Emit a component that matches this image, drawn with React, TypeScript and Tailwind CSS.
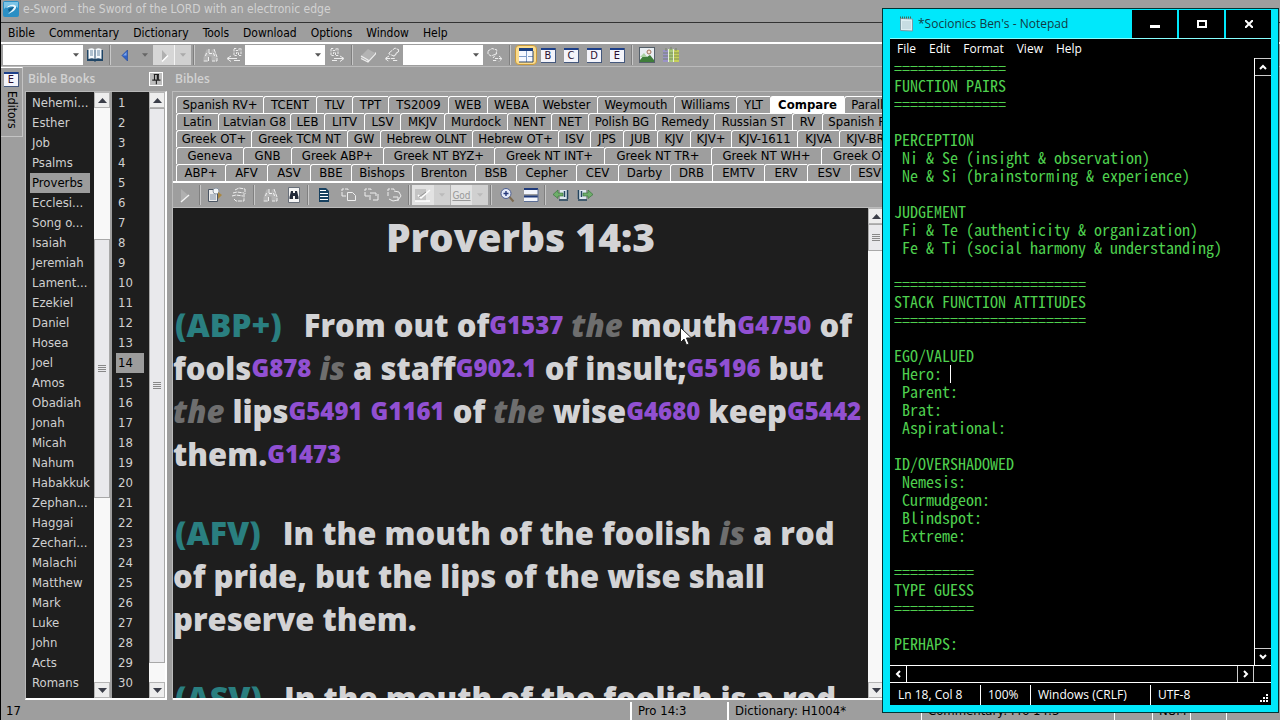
// src/App.tsx
import { useState } from "react";
import type { ReactNode } from "react";
import clsx from "clsx";

interface Tab {
  label: string;
  width: string;
}

const MENUS = ["Bible", "Commentary", "Dictionary", "Tools", "Download", "Options", "Window", "Help"];

const BOOKS = [
  "Nehemi...", "Esther", "Job", "Psalms", "Proverbs", "Ecclesi...", "Song o...", "Isaiah", "Jeremiah", "Lament...",
  "Ezekiel", "Daniel", "Hosea", "Joel", "Amos", "Obadiah", "Jonah", "Micah", "Nahum", "Habakkuk",
  "Zephan...", "Haggai", "Zechari...", "Malachi", "Matthew", "Mark", "Luke", "John", "Acts", "Romans",
];

const TAB_ROWS: Tab[][] = [
  [
    { label: "Spanish RV+", width: "w-[87px]" },
    { label: "TCENT", width: "w-[53px]" },
    { label: "TLV", width: "w-[36px]" },
    { label: "TPT", width: "w-[36px]" },
    { label: "TS2009", width: "w-[60px]" },
    { label: "WEB", width: "w-[39px]" },
    { label: "WEBA", width: "w-[48px]" },
    { label: "Webster", width: "w-[62px]" },
    { label: "Weymouth", width: "w-[77px]" },
    { label: "Williams", width: "w-[62px]" },
    { label: "YLT", width: "w-[34px]" },
    { label: "Compare", width: "w-[74px]" },
    { label: "Parallel", width: "w-[56px]" },
  ],
  [
    { label: "Latin", width: "w-[42px]" },
    { label: "Latvian G8", width: "w-[72px]" },
    { label: "LEB", width: "w-[34px]" },
    { label: "LITV", width: "w-[40px]" },
    { label: "LSV", width: "w-[36px]" },
    { label: "MKJV", width: "w-[44px]" },
    { label: "Murdock", width: "w-[63px]" },
    { label: "NENT", width: "w-[44px]" },
    { label: "NET", width: "w-[37px]" },
    { label: "Polish BG", width: "w-[67px]" },
    { label: "Remedy", width: "w-[59px]" },
    { label: "Russian ST", width: "w-[78px]" },
    { label: "RV", width: "w-[30px]" },
    { label: "Spanish RV", width: "w-[77px]" },
  ],
  [
    { label: "Greek OT+", width: "w-[75px]" },
    { label: "Greek TCM NT", width: "w-[96px]" },
    { label: "GW", width: "w-[33px]" },
    { label: "Hebrew OLNT", width: "w-[92px]" },
    { label: "Hebrew OT+", width: "w-[86px]" },
    { label: "ISV", width: "w-[32px]" },
    { label: "JPS", width: "w-[33px]" },
    { label: "JUB", width: "w-[34px]" },
    { label: "KJV", width: "w-[33px]" },
    { label: "KJV+", width: "w-[41px]" },
    { label: "KJV-1611", width: "w-[66px]" },
    { label: "KJVA", width: "w-[42px]" },
    { label: "KJV-BRG", width: "w-[61px]" },
  ],
  [
    { label: "Geneva", width: "w-[67px]" },
    { label: "GNB", width: "w-[48px]" },
    { label: "Greek ABP+", width: "w-[92px]" },
    { label: "Greek NT BYZ+", width: "w-[111px]" },
    { label: "Greek NT INT+", width: "w-[110px]" },
    { label: "Greek NT TR+", width: "w-[107px]" },
    { label: "Greek NT WH+", width: "w-[110px]" },
    { label: "Greek OT", width: "w-[78px]" },
  ],
  [
    { label: "ABP+", width: "w-[49px]" },
    { label: "AFV", width: "w-[42px]" },
    { label: "ASV", width: "w-[43px]" },
    { label: "BBE", width: "w-[41px]" },
    { label: "Bishops", width: "w-[61px]" },
    { label: "Brenton", width: "w-[63px]" },
    { label: "BSB", width: "w-[41px]" },
    { label: "Cepher", width: "w-[60px]" },
    { label: "CEV", width: "w-[42px]" },
    { label: "Darby", width: "w-[52px]" },
    { label: "DRB", width: "w-[42px]" },
    { label: "EMTV", width: "w-[52px]" },
    { label: "ERV", width: "w-[43px]" },
    { label: "ESV", width: "w-[43px]" },
    { label: "ESV+", width: "w-[48px]" },
  ],
];

const NOTES = `==============
FUNCTION PAIRS
==============

PERCEPTION
 Ni & Se (insight & observation)
 Ne & Si (brainstorming & experience)

JUDGEMENT
 Fi & Te (authenticity & organization)
 Fe & Ti (social harmony & understanding)

========================
STACK FUNCTION ATTITUDES
========================

EGO/VALUED
 Hero: 
 Parent:
 Brat:
 Aspirational:

ID/OVERSHADOWED
 Nemesis:
 Curmudgeon:
 Blindspot:
 Extreme:

==========
TYPE GUESS
==========

PERHAPS:`;

/* ---------- icons ---------- */

function Svg({ children, size = 16 }: { children: ReactNode; size?: number }) {
  return (
    <svg width={size} height={size} viewBox="0 0 16 16" fill="none" aria-hidden="true">
      {children}
    </svg>
  );
}

const LogoIcon = () => (
  <Svg>
    <rect width="16" height="16" rx="2" fill="#2b8fc4" />
    <path d="M1 1h14v6C11 3 6 3 1 8z" fill="#7cc4e6" />
    <path d="M3 7c3-4 8-4 10-2 1 3-3 6-8 8 3-3 5-5 6-7-3-1-5 0-8 1z" fill="#e8f6fc" />
    <path d="M5 8c2-1 4-2 6-2-1 2-3 4-5 5z" fill="#14618f" />
  </Svg>
);

const BookIcon = () => (
  <Svg>
    <path d="M0 3h16v11H9l-1 1-1-1H0z" fill="#1f4566" />
    <path d="M1.500 2C4 1 6 1 7.500 2.500v9.500C6 11 4 11 1.500 12zM14.500 2C12 1 10 1 8.500 2.500v9.500c1.500-1 3.500-1 6 0z" fill="#f4f8fb" />
    <path d="M3 4h3M3 6h3M3 8h3M10 4h3M10 6h3M10 8h3" stroke="#6b8ba6" />
  </Svg>
);

const BackIcon = () => (
  <Svg>
    <path d="M10.500 3v11L5 8.500z" fill="#2f63c8" stroke="#1c459c" strokeWidth=".6" />
    <path d="M9.500 5v3.500H6z" fill="#7ea6ea" />
  </Svg>
);

const ForwardIcon = () => (
  <Svg>
    <path d="M6 3l5 5.500L6 14z" fill="#b0b0b0" />
    <path d="M6 14.500l6-6" stroke="#fff" strokeWidth="1.500" />
  </Svg>
);

const PlayIcon = () => (
  <Svg>
    <path d="M4 2v12l7-6z" fill="#b0b0b0" />
    <path d="M4 15l8-7" stroke="#f2f2f2" strokeWidth="1.500" />
  </Svg>
);

const FindIcon = () => (
  <Svg>
    <path d="M4.500 2.500h2v3h3v-3h2l3 8v3h-5v-4h-3v4h-5v-3z" fill="#b2b2b2" />
    <path d="M7 2v4M12 2l3 8v4h-5M6.500 10v4H1M7 6.500h3M3.500 9l1-3M12.500 9l-1-3" stroke="#f2f2f2" strokeDasharray="4 .8" />
  </Svg>
);

const FindPrevIcon = ({ flip = false }: { flip?: boolean }) => (
  <Svg>
    <path d={flip ? "M2 1.500h2v2h3v-2h2v7H6.500v-3h-2v3H2z" : "M8 1.500h2v2h3v-2h2v7h-2.500v-3h-2v3H8z"} stroke="#eee" strokeDasharray="2.500 1" />
    <path d={flip ? "M5 11.500h9M11 9l4 2.500-4 3M3 13.500h5" : "M2 11.500h9M5 9l-4 2.500 4 3M8 13.500h6"} stroke="#eee" />
  </Svg>
);

const EraserIcon = () => (
  <Svg>
    <path d="M1 9l7-7 7 4-7 8-7-3z" fill="#b3b3b3" />
    <path d="M1 11.500L8 15l7.500-8V5.500M8 12.500v2M1 9l7 4" stroke="#eee" strokeWidth="1.200" />
  </Svg>
);

const EraseArrowIcon = ({ flip = false }: { flip?: boolean }) => (
  <Svg>
    {flip ? (
      <path d="M1 4l4-2.500L10 3l-1 4-5 2-3-2zM6 11l4-5M8 11.500h7M12 9l3 2.500-3 3M6 13.500h4" stroke="#eee" strokeDasharray="3 .8" />
    ) : (
      <path d="M5 6l6-5 4 2-5 6-5-2zM2 11.500h9M5 9l-4 2.500 4 3M9 13.500h5M10 9.500L15 4" stroke="#eee" strokeDasharray="4 .8" />
    )}
  </Svg>
);

const LayoutIcon = () => (
  <Svg>
    <rect x="1" y="1" width="14" height="14" fill="#f5f8ff" />
    <path d="M1 1h14v3H1z" fill="#1c3f7f" />
    <path d="M8.500 4v11M1 9.500h7M10 9.500h5" stroke="#7d9cc9" />
    <path d="M15 4v11H1" stroke="#2d4468" />
  </Svg>
);

function LetterIcon({ letter }: { letter: string }) {
  return (
    <span className="flex h-[15px] w-[15px] flex-col border-r border-b border-[#44587d] bg-[#f4f4fa]">
      <span className="h-[3px] bg-[#1c3f8a]" />
      <span className="text-center text-[11px] leading-[12px] text-[#2c1030]">{letter}</span>
    </span>
  );
}

const PictureIcon = () => (
  <Svg>
    <rect x=".5" y=".5" width="15" height="15" fill="#e9eef2" stroke="#55606a" />
    <circle cx="10" cy="5" r="2" fill="#f6e2d4" stroke="#a0705a" />
    <path d="M1 13l4-5 3 2 3-2 4 5v2H1z" fill="#3f7d3a" />
    <path d="M1 10l4-4 3 4z" fill="#a9cfa0" />
  </Svg>
);

const ParallelIcon = () => (
  <Svg>
    <path d="M0 3h5v12H0z" fill="#9b93c8" />
    <path d="M5 2h5v13H5z" fill="#a8c878" />
    <path d="M10 3h6v12h-6z" fill="#c6cf58" />
    <path d="M0 6h16M0 9h16M0 12h16M3 1v3M8 0v3M13 1v3" stroke="#6c7e58" strokeWidth=".8" />
    <path d="M5.500 2v13M10.500 2v13" stroke="#e8efda" />
  </Svg>
);

const NoteIcon = () => (
  <Svg>
    <path d="M1.500 2.500h9v12h-9z" fill="#ececec" stroke="#4b5664" />
    <path d="M3 8h6M3 10h6M3 12h6" stroke="#7f8ea3" />
    <circle cx="9" cy="4" r="3" fill="#f3f6f8" stroke="#8d97a3" />
    <path d="M11 5l4 3-4 4z" fill="#a98743" />
  </Svg>
);

const StackIcon = () => (
  <Svg>
    <path d="M4 3l4-2 6 1v5M2 6l4-1 7 1M1 9l4-1 7 1M3 12l2 2h8V7" stroke="#eee" strokeDasharray="4 .8" />
  </Svg>
);

const SearchPageIcon = () => (
  <Svg>
    <path d="M2.500.5h11v15h-11z" fill="#f4f4f4" stroke="#69707a" />
    <path d="M5 4h2v2h2V4h2l1.500 6v2h-3.500V9H7v3H3.500v-2z" fill="#222a3a" />
  </Svg>
);

const LinesIcon = () => (
  <Svg>
    <path d="M3 1h7l3 3v11H3z" fill="#17405f" />
    <path d="M4 3.500h6M4 6.500h8M4 9.500h8M4 12.500h8" stroke="#fff" />
  </Svg>
);

const CopyIcon = ({ variant }: { variant: number }) => (
  <Svg>
    <path d="M1 9V2h6v2" stroke="#eee" strokeDasharray="4 1" />
    {variant === 0 && <path d="M6.500 5.500h5l3 3v5h-8zM1 9h4" stroke="#eee" />}
    {variant === 1 && <path d="M6 6h6v3M1 9h4M9 13h5V7M6 8v5" stroke="#eee" />}
    {variant === 2 && <path d="M2 12l4 2 5-1 3-4-2-4-5-1M6 10h5v4" stroke="#eee" />}
  </Svg>
);

const PenIcon = () => (
  <Svg>
    <path d="M0 2h11v12H0z" fill="#c4c4c4" />
    <path d="M0 14h15M3 8l3 3 9-8" stroke="#fff" strokeWidth="1.500" />
    <path d="M4 10l7-5" stroke="#999" />
  </Svg>
);

const ZoomIcon = () => (
  <Svg>
    <circle cx="7" cy="6.500" r="5" fill="#e3eaf8" stroke="#4e5f92" />
    <path d="M7 4v5M4.500 6.500h5" stroke="#26397c" strokeWidth="1.400" />
    <path d="M10.500 10l4 4.500" stroke="#7c6a50" strokeWidth="2" />
  </Svg>
);

const SplitIcon = () => (
  <Svg>
    <path d="M1 1h14v6H1zM1 9h14v6H1z" fill="#f2f5fc" />
    <path d="M1 2h14M1 9.500h14" stroke="#1f3a7a" strokeWidth="2" />
    <path d="M15 2v12.500H1" stroke="#5c6f97" />
  </Svg>
);

const SyncIcon = ({ right = false }: { right?: boolean }) => (
  <Svg>
    <path d={right ? "M1 3h8v9H1z" : "M7 3h8v9H7z"} fill="#dfe8ef" />
    <path d={right ? "M1 13h9M1.500 3v9M4.500 4v6" : "M6 13h9M14.500 3v9M11.500 4v6"} stroke="#23455f" strokeWidth="1.500" />
    <path d={right ? "M6 6h5V3l5 4.500-5 4V9H6z" : "M10 6H5V3L0 7.500l5 4V9h5z"} fill="#6fae6a" stroke="#2d6b33" strokeWidth=".6" />
  </Svg>
);

const PinIcon = () => (
  <Svg size={12}>
    <path d="M5 2h7M6 2v7M11 2v7M3 9.500h11M8.500 10v5" stroke="#222" strokeWidth="1.500" />
    <path d="M9 2h2v7H9z" fill="#222" />
  </Svg>
);

const NotepadIcon = () => (
  <Svg>
    <path d="M2.500 2.500l12 .5v12l-12-.5z" fill="#dceef2" stroke="#7a9aa5" />
    <path d="M4 6h9M4 8h9M4 10h9M4 12h9" stroke="#b2ccd3" />
    <path d="M2 1.500h12" stroke="#465" strokeWidth="2" strokeDasharray="1 1" />
  </Svg>
);

/* ---------- small pieces ---------- */

function Cell({ className, label, children }: { className: string; label: string; children: ReactNode }) {
  return (
    <button type="button" aria-label={label} className={clsx("flex h-5 shrink-0 items-center justify-center", className)}>
      {children}
    </button>
  );
}

function Separator() {
  return (
    <span className="flex w-1.5 shrink-0 justify-center">
      <span className="h-5 w-0.5 border-l border-[#808080] bg-[#c8c8c8]" />
    </span>
  );
}

function Triangle({ className }: { className?: string }) {
  return (
    <svg width="6" height="4" viewBox="0 0 7 4" className={clsx("fill-current", className)} aria-hidden="true">
      <path d="M0 0h7L3.500 4z" />
    </svg>
  );
}

function Combo({ label }: { label: string }) {
  return (
    <span className="relative flex h-5 w-20 shrink-0 items-center bg-white">
      <select aria-label={label} className="h-full w-full appearance-none bg-white">
        <option value="" />
      </select>
      <span className="pointer-events-none absolute right-1 text-[#555]">
        <Triangle />
      </span>
    </span>
  );
}

function ScrollButton({ up = false }: { up?: boolean }) {
  return (
    <button
      type="button"
      aria-label={up ? "Scroll up" : "Scroll down"}
      className="flex h-4 w-full shrink-0 items-center justify-center border border-[#b4b4b4] bg-[#ededed] text-[#3a3d48]"
    >
      <svg width="9" height="5" viewBox="0 0 9 5" className="fill-current" aria-hidden="true">
        <path d={up ? "M0 5h9L4.500 0z" : "M0 0h9L4.500 5z"} />
      </svg>
    </button>
  );
}

// before/thumb/after are flex-grow classes for the track
function ScrollBar({ before, thumb, after }: { before: string; thumb: string; after: string }) {
  return (
    <div className="flex w-4 shrink-0 flex-col bg-[#f8f8f8]">
      <ScrollButton up />
      <div className="flex min-h-0 flex-1 flex-col">
        <div className={before} />
        <div className={clsx("flex flex-col items-center justify-center gap-px border border-[#a8a8a8] bg-[#e9e9ec]", thumb)}>
          {[0, 1, 2, 3].map((n) => (
            <span key={n} className="h-px w-2 bg-[#888]" />
          ))}
        </div>
        <div className={after} />
      </div>
      <ScrollButton />
    </div>
  );
}

const Strong = ({ children }: { children: string }) => (
  <a href={`#${children}`} className="align-[3px] text-[24px] leading-none text-[#9150d2]">{children}</a>
);
const Added = ({ children }: { children: string }) => <i className="text-[#6e6e6e]">{children}</i>;
const Version = ({ children }: { children: string }) => (
  <span className="mr-3.5 ml-0.5 text-[32px] leading-none text-[#2a7f80]">({children})</span>
);

/* ---------- e-Sword window ---------- */

function MainToolbar() {
  return (
    <div className="flex h-[23px] shrink-0 items-center overflow-hidden border-b border-[#bbb] pl-0.5">
      <Combo label="Go to verse" />
      <Cell className="w-6" label="Look up"><BookIcon /></Cell>
      <Separator />
      <Cell className="w-6" label="Back"><BackIcon /></Cell>
      <Cell className="w-4" label="Back history"><Triangle className="text-[#666]" /></Cell>
      <Cell className="w-[21px] bg-[#d6d6d6]" label="Forward"><ForwardIcon /></Cell>
      <Cell className="w-[17px] border-l border-[#f4f4f4] bg-[#d0d0d0]" label="Forward history"><Triangle className="text-[#aaa]" /></Cell>
      <Separator />
      <Cell className="w-[26px]" label="Find"><FindIcon /></Cell>
      <Cell className="w-[22px]" label="Find previous"><FindPrevIcon /></Cell>
      <Combo label="Find text" />
      <Cell className="w-6" label="Find next"><FindPrevIcon flip /></Cell>
      <Separator />
      <Cell className="w-[26px]" label="Erase"><EraserIcon /></Cell>
      <Cell className="w-[22px]" label="Erase previous"><EraseArrowIcon /></Cell>
      <Combo label="Highlight" />
      <Cell className="w-6" label="Erase next"><EraseArrowIcon flip /></Cell>
      <Separator />
      <Cell className="ml-0.5 w-[22px] rounded-sm border border-[#c99a3c] bg-[#fbdc8d]" label="Layout"><LayoutIcon /></Cell>
      {["B", "C", "D", "E"].map((letter) => (
        <Cell key={letter} className="w-[23px]" label={`Show ${letter}`}><LetterIcon letter={letter} /></Cell>
      ))}
      <Separator />
      <Cell className="w-6" label="Graphics"><PictureIcon /></Cell>
      <Cell className="w-6" label="Harmony"><ParallelIcon /></Cell>
    </div>
  );
}

function BibleToolbar() {
  return (
    <div className="flex h-[25px] shrink-0 items-center overflow-hidden border-b border-[#bbb]">
      <Cell className="w-6" label="Play"><PlayIcon /></Cell>
      <Separator />
      <Cell className="w-6" label="Notes"><NoteIcon /></Cell>
      <Cell className="w-6" label="Highlights"><StackIcon /></Cell>
      <Separator />
      <Cell className="w-[26px]" label="Find in Bible"><FindIcon /></Cell>
      <Cell className="w-[22px]" label="Search"><SearchPageIcon /></Cell>
      <Separator />
      <Cell className="w-[26px]" label="Copy verses"><LinesIcon /></Cell>
      <Cell className="w-[23px]" label="Copy"><CopyIcon variant={0} /></Cell>
      <Cell className="w-[23px]" label="Copy chapter"><CopyIcon variant={1} /></Cell>
      <Cell className="w-[23px]" label="Copy book"><CopyIcon variant={2} /></Cell>
      <Separator />
      <Cell className="w-[22px] bg-[#e2e2e2]" label="Pen"><PenIcon /></Cell>
      <Cell className="w-4 bg-[#d0d0d0]" label="Pen colour"><Triangle className="text-[#bbb]" /></Cell>
      <Cell className="w-[22px] border-l border-[#b0b0b0] bg-[#e2e2e2] text-[10px] text-[#999] underline" label="Divine name">God</Cell>
      <Cell className="w-4 bg-[#d0d0d0]" label="Divine name options"><Triangle className="text-[#bbb]" /></Cell>
      <Separator />
      <Cell className="w-[26px]" label="Zoom"><ZoomIcon /></Cell>
      <Cell className="w-[22px]" label="Split"><SplitIcon /></Cell>
      <Separator />
      <Cell className="w-[26px]" label="Sync left"><SyncIcon /></Cell>
      <Cell className="w-[22px]" label="Sync right"><SyncIcon right /></Cell>
    </div>
  );
}

function BookPanel() {
  const [book, setBook] = useState("Proverbs");
  const [chapter, setChapter] = useState(14);

  return (
    <section className="flex w-[142px] shrink-0 flex-col">
      <div className="flex h-6 items-center justify-between pr-1 pl-[3px] font-['Open_Sans','Noto_Sans',sans-serif] text-[12px] font-semibold text-[#d2d2d2]">
        <h2>Bible Books</h2>
        <button type="button" aria-label="Pin" className="flex h-3.5 w-3.5 items-center justify-center border border-white bg-[#bdbdbd]">
          <PinIcon />
        </button>
      </div>
      <div className="flex min-h-0 flex-1 overflow-hidden border-t border-r-2 border-b-2 border-l border-white border-t-[#b8b8b8] border-l-[#b8b8b8] bg-[#1e1e1e] text-[13px] text-[#d0d0d0]">
        <ul className="min-w-0 flex-1 px-1 pt-px">
          {BOOKS.map((name) => (
            <li key={name}>
              <button
                type="button"
                onClick={() => setBook(name)}
                className={clsx("block h-5 w-[60px] px-0.5 text-left leading-5 whitespace-nowrap", name === book && "bg-[#9c9c9c] text-black")}
              >
                {name}
              </button>
            </li>
          ))}
        </ul>
        <ScrollBar before="grow-[133]" thumb="grow-[253]" after="grow-[187]" />
        <ul className="w-[39px] shrink-0 border-l-2 border-[#9e9e9e] px-1 pt-px">
          {BOOKS.map((_, i) => (
            <li key={i}>
              <button
                type="button"
                onClick={() => setChapter(i + 1)}
                className={clsx("block h-5 w-7 px-0.5 text-left leading-5", i + 1 === chapter && "bg-[#9c9c9c] text-black")}
              >
                {i + 1}
              </button>
            </li>
          ))}
        </ul>
        <ScrollBar before="grow-0" thumb="grow-[554]" after="grow-[19]" />
      </div>
    </section>
  );
}

function BiblePanel() {
  const [active, setActive] = useState("Compare");

  return (
    <section className="mr-[396px] ml-[5px] flex min-w-0 flex-1 flex-col">
      <h2 className="h-6 pl-[3px] font-['Open_Sans','Noto_Sans',sans-serif] text-[12px] leading-6 font-semibold text-[#d2d2d2]">Bibles</h2>
      <div className="flex min-h-0 flex-1 flex-col border-t border-l border-[#bcbcbc]">
        <div className="shrink-0 overflow-hidden border-b-2 border-white pt-1 pl-[3px]">
          {TAB_ROWS.map((row, i) => (
            <div key={i} className="flex">
              {row.map(({ label, width }) => (
                <button
                  key={label}
                  type="button"
                  onClick={() => setActive(label)}
                  className={clsx(
                    "h-[17px] shrink-0 rounded-tl-[3px] border-t border-l border-white text-center text-[13px] leading-4 whitespace-nowrap text-black",
                    width,
                    label === active && "bg-white font-bold"
                  )}
                >
                  {label}
                </button>
              ))}
            </div>
          ))}
        </div>
        <BibleToolbar />
        <div className="flex min-h-0 flex-1 border-b-2 border-white bg-[#1e1e1e]">
          <article className="min-w-0 flex-1 overflow-hidden font-['Open_Sans','Noto_Sans',sans-serif] text-[31px] leading-[43px] font-extrabold text-[#d3d3d5]">
            <h1 className="pt-[3px] text-center text-[39px] leading-[52px]">Proverbs 14:3</h1>
            <p className="mt-[41px] whitespace-nowrap">
              <Version>ABP+</Version> From out of<Strong>G1537</Strong> <Added>the</Added> mouth<Strong>G4750</Strong> of<br />
              fools<Strong>G878</Strong> <Added>is</Added> a staff<Strong>G902.1</Strong> of insult;<Strong>G5196</Strong> but<br />
              <Added>the</Added> lips<Strong>G5491</Strong> <Strong>G1161</Strong> of <Added>the</Added> wise<Strong>G4680</Strong> keep<Strong>G5442</Strong><br />
              them.<Strong>G1473</Strong>
            </p>
            <p className="mt-9 whitespace-nowrap">
              <Version>AFV</Version> In the mouth of the foolish <Added>is</Added> a rod<br />
              of pride, but the lips of the wise shall<br />
              preserve them.
            </p>
            <p className="mt-9 whitespace-nowrap">
              <Version>ASV</Version> In the mouth of the foolish is a rod
            </p>
          </article>
          <ScrollBar before="grow-0" thumb="h-[27px] shrink-0" after="grow" />
        </div>
      </div>
    </section>
  );
}

function SwordWindow() {
  return (
    <div className="flex h-full flex-col border-l border-black bg-[#9e9e9e] font-['DejaVu_Sans_Condensed','Noto_Sans',sans-serif] text-[12px] text-black">
      <header className="flex h-[23px] shrink-0 items-center gap-1 border-b border-[#333] pb-1 pl-0.5 text-[#d2d2d2]">
        <LogoIcon />
        <span>e-Sword - the Sword of the LORD with an electronic edge</span>
      </header>
      <nav className="flex h-[21px] shrink-0 items-center gap-3.5 border-b-2 border-white pl-[7px]">
        {MENUS.map((menu) => (
          <button key={menu} type="button">{menu}</button>
        ))}
      </nav>
      <MainToolbar />
      <main className="flex min-h-0 flex-1">
        <aside className="w-6 shrink-0">
          <button type="button" className="flex h-[70px] w-[22px] flex-col items-center gap-1 border-t border-r border-b border-[#c4c4c4] border-t-white pt-1">
            <LetterIcon letter="E" />
            <span className="[writing-mode:vertical-rl]">Editors</span>
          </button>
        </aside>
        <BookPanel />
        <BiblePanel />
      </main>
      <footer className="flex h-5 shrink-0 pt-0.5 text-[13px] leading-[18px] whitespace-nowrap">
        <span className="w-[629px] shrink-0 pl-[5px]">17</span>
        <span className="w-[97px] shrink-0 border-l-2 border-white pl-1.5">Pro 14:3</span>
        <span className="w-[194px] shrink-0 border-l-2 border-white pl-1.5">Dictionary: H1004*</span>
        <span className="w-[193px] shrink-0 border-l border-white pl-1.5">Commentary: Pro 14:3</span>
        <span className="w-[38px] shrink-0 border-l border-white" />
        <span className="w-[38px] shrink-0 border-l border-white pl-1.5">NUM</span>
        <span className="w-[36px] shrink-0 border-l border-white" />
        <span className="flex-1 border-l border-white" />
      </footer>
    </div>
  );
}

/* ---------- Notepad window ---------- */

function Chevron({ d }: { d: string }) {
  return (
    <svg width="8" height="8" viewBox="0 0 8 8" fill="none" stroke="#fff" strokeWidth="2" aria-hidden="true">
      <path d={d} />
    </svg>
  );
}

function Notepad() {
  const [text, setText] = useState(NOTES);

  return (
    <div className="absolute top-2 right-px bottom-[7px] flex w-[397px] flex-col border border-[#033] bg-[#00e8fb] px-[7px] pb-[7px] font-['Open_Sans','Noto_Sans',sans-serif] text-[12px] text-white">
      <header className="flex h-[30px] shrink-0 items-center border-b border-[#8ff] pt-px">
        <span className="flex flex-1 items-center gap-1 pl-2 text-[#123a44]">
          <NotepadIcon />
          *Socionics Ben's - Notepad
        </span>
        <span className="flex h-full gap-0.5">
          <button type="button" aria-label="Minimize" className="flex w-[45px] items-center justify-center bg-black">
            <span className="mt-1 h-[3px] w-2.5 bg-white" />
          </button>
          <button type="button" aria-label="Maximize" className="flex w-[45px] items-center justify-center bg-black">
            <span className="h-2 w-2.5 border-2 border-white" />
          </button>
          <button type="button" aria-label="Close" className="flex w-[45px] items-center justify-center bg-black">
            <Chevron d="M0 0l8 8M8 0L0 8" />
          </button>
        </span>
      </header>
      <nav className="flex h-[19px] shrink-0 items-center gap-[13px] bg-black pl-[7px]">
        {["File", "Edit", "Format", "View", "Help"].map((item) => (
          <button key={item} type="button">{item}</button>
        ))}
      </nav>
      <div className="flex min-h-0 flex-1 bg-black">
        <div className="relative min-w-0 flex-1">
          <textarea
            aria-label="Notes"
            spellCheck={false}
            value={text}
            onChange={(e) => setText(e.target.value)}
            className="block h-full w-full resize-none overflow-hidden bg-black pl-1 font-['Noto_Sans_Mono_CJK_SC','Liberation_Mono',monospace] text-[16px] leading-[18px] whitespace-pre text-[#4fd04f] outline-none"
          />
          <span className="absolute top-[307px] left-[60px] h-[18px] w-px bg-white" />
        </div>
        <div className="flex w-[17px] shrink-0 flex-col border-l border-white">
          <button type="button" aria-label="Scroll up" className="flex h-[18px] items-center justify-center border-y border-[#ccc]">
            <Chevron d="M1 6l3-3 3 3" />
          </button>
          <span className="flex-1" />
          <button type="button" aria-label="Scroll down" className="flex h-[17px] items-center justify-center border-t border-[#ccc]">
            <Chevron d="M1 2l3 3 3-3" />
          </button>
        </div>
      </div>
      <div className="flex h-[18px] shrink-0 border-y border-white bg-black">
        <button type="button" aria-label="Scroll left" className="flex w-[17px] items-center justify-center border-r border-white">
          <Chevron d="M6 1L3 4l3 3" />
        </button>
        <span className="flex-1" />
        <button type="button" aria-label="Scroll right" className="mr-[17px] flex w-[17px] items-center justify-center border-x border-[#ccc]">
          <Chevron d="M2 1l3 3-3 3" />
        </button>
      </div>
      <footer className="flex h-[22px] shrink-0 items-end bg-black pt-px leading-5">
        <span className="w-[90px] pl-2">Ln 18, Col 8</span>
        <span className="w-[50px] border-l border-white pl-[7px]">100%</span>
        <span className="w-[120px] border-l border-white pl-[7px]">Windows (CRLF)</span>
        <span className="flex-1 border-l border-white pl-[7px]">UTF-8</span>
        <svg width="11" height="11" viewBox="0 0 11 11" fill="#fff" aria-hidden="true">
          <path d="M6 0h2v2H6zM3 3h2v2H3zM6 3h2v2H6zM0 6h2v2H0zM3 6h2v2H3zM6 6h2v2H6z" />
        </svg>
      </footer>
    </div>
  );
}

export default function App() {
  return (
    <div className="relative h-screen overflow-hidden">
      <SwordWindow />
      <Notepad />
      {/* mouse pointer */}
      <svg width="12" height="19" viewBox="0 0 12 19" className="absolute top-[327px] left-[680px]" aria-hidden="true">
        <path d="M.5.5v15l3.500-3.500 2.500 6 2.500-1-2.500-6h5z" fill="#fff" stroke="#222" />
      </svg>
    </div>
  );
}
